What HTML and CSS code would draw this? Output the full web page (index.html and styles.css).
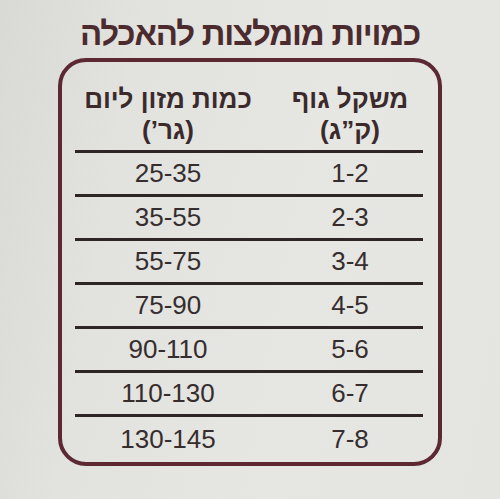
FILE: index.html
```html
<!DOCTYPE html>
<html lang="he" dir="rtl">
<head>
<meta charset="utf-8">
<link rel="stylesheet" href="styles.css">
</head>
<body>
<div class="page">
  <h1 class="title">כמויות מומלצות להאכלה</h1>
  <div class="card">
    <div class="head">
      <div class="cell weight">משקל גוף<br>(ק”ג)</div>
      <div class="cell amount">כמות מזון ליום<br>(גר’)</div>
    </div>
    <div class="row"><div class="cell weight">1-2</div><div class="cell amount">25-35</div></div>
    <div class="row"><div class="cell weight">2-3</div><div class="cell amount">35-55</div></div>
    <div class="row"><div class="cell weight">3-4</div><div class="cell amount">55-75</div></div>
    <div class="row"><div class="cell weight">4-5</div><div class="cell amount">75-90</div></div>
    <div class="row"><div class="cell weight">5-6</div><div class="cell amount">90-110</div></div>
    <div class="row"><div class="cell weight">6-7</div><div class="cell amount">110-130</div></div>
    <div class="row"><div class="cell weight">7-8</div><div class="cell amount">130-145</div></div>
  </div>
</div>
</body>
</html>
```

FILE: styles.css
```css
html, body {
  margin: 0;
  padding: 0;
}
body {
  width: 500px;
  height: 499px;
  overflow: hidden;
  background: linear-gradient(100deg, #d9d9d5 0%, #e2e2de 25%, #e6e6e2 60%, #e4e4e0 100%);
  font-family: "Liberation Sans", "DejaVu Sans", sans-serif;
}
.page {
  padding-top: 14px;
}
.title {
  margin: 0;
  height: 44px;
  line-height: 40px;
  text-align: center;
  font-size: 33px;
  letter-spacing: -1.2px;
  font-weight: bold;
  color: #4c2b2e;
}
.card {
  box-sizing: border-box;
  width: 384px;
  margin-right: 58px;
  border: 4px solid #5c2933;
  border-radius: 28px;
  padding: 0 15px 0 13px;
}
.head, .row {
  display: grid;
  grid-template-columns: 146px 1fr;
  align-items: center;
  text-align: center;
  border-bottom: 3px solid #2f2527;
}
.head {
  height: 88px;
  align-items: start;
  font-weight: bold;
  font-size: 26px;
  line-height: 31px;
  color: #3b2a2c;
}
.head .cell {
  padding-top: 22px;
}
.row {
  height: 41px;
  font-size: 26px;
  color: #352d2e;
}
.row:last-child {
  border-bottom: none;
  height: 45px;
}
.amount {
  padding-right: 16px;
}
```
